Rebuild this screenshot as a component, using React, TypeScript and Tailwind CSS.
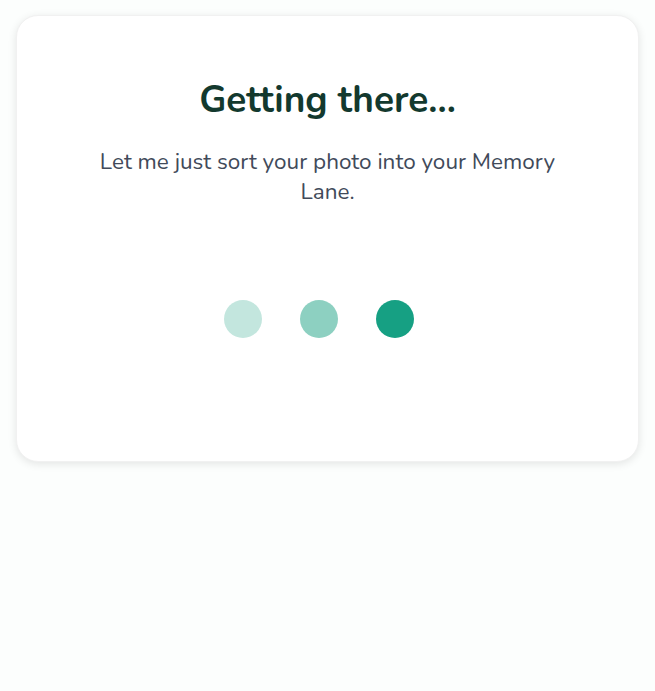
export default function App() {
  return (
    <div className="min-h-screen bg-[#fcfefd] px-4 pt-[15px]" style={{ fontFamily: '"Nunito", "Open Sans", "Noto Sans", sans-serif' }}>
      <div className="rounded-[22px] bg-white shadow-[0_2px_8px_rgba(0,0,0,0.10)] border border-[#f1f1f1] pt-[64px] pb-[123px] flex flex-col items-center">
        <h1 className="text-[37px] leading-[40px] font-bold text-[#13392e]">Getting there...</h1>
        <p className="mt-[27px] w-[480px] text-center text-[22.5px] leading-[30px] text-[#414a5a]">
          Let me just sort your photo into your Memory Lane.
        </p>
        <div className="mt-[93px] flex gap-[38px] pr-[18px]">
          <div className="w-[38px] h-[38px] rounded-full bg-[#c3e6de]" />
          <div className="w-[38px] h-[38px] rounded-full bg-[#8dd0c1]" />
          <div className="w-[38px] h-[38px] rounded-full bg-[#16a083]" />
        </div>
      </div>
    </div>
  );
}
